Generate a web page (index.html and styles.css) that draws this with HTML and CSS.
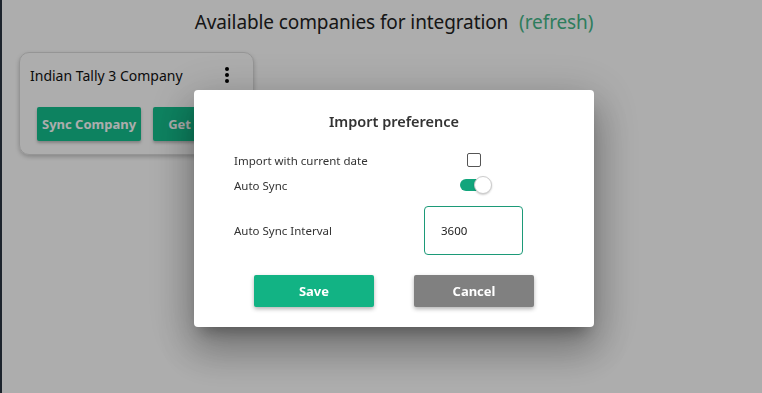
FILE: index.html
```html
<!DOCTYPE html>
<html lang="en">
<head>
  <meta charset="UTF-8" />
  <meta name="viewport" content="width=device-width, initial-scale=1.0"/>
  <title>Integration</title>
  <link rel="stylesheet" href="styles.css">
</head>
<body>

<div class="app">
  <div class="side-edge"></div>

  <main class="content">
    <h1 class="page-title">
      Available companies for integration
      <a href="#" class="refresh">(refresh)</a>
    </h1>

    <div class="company-card">
      <div class="card-head">
        <span class="company-name">Indian Tally 3 Company</span>
        <div class="kebab">
          <span></span>
          <span></span>
          <span></span>
        </div>
      </div>
      <div class="card-actions">
        <button class="card-button">Sync Company</button>
        <button class="card-button wide">Get Ledgers</button>
      </div>
    </div>
  </main>
</div>

<div class="overlay">
  <div class="dialog">
    <h2 class="dialog-title">Import preference</h2>

    <div class="pref-grid">
      <label class="pref-label" for="currentDate">Import with current date</label>
      <div class="pref-control">
        <input type="checkbox" id="currentDate" class="checkbox">
      </div>

      <span class="pref-label">Auto Sync</span>
      <div class="pref-control">
        <div class="toggle">
          <div class="toggle-track"></div>
          <div class="toggle-knob"></div>
        </div>
      </div>

      <label class="pref-label interval-row" for="interval">Auto Sync Interval</label>
      <div class="pref-control interval-row">
        <input type="text" id="interval" class="interval-input" value="3600">
      </div>
    </div>

    <div class="dialog-actions">
      <button class="btn btn-save">Save</button>
      <button class="btn btn-cancel">Cancel</button>
    </div>
  </div>
</div>

</body>
</html>
```

FILE: styles.css
```css
* {
  box-sizing: border-box;
  margin: 0;
  padding: 0;
  font-family: 'Noto Sans', 'Open Sans', sans-serif;
}

body {
  background: #ffffff;
  height: 393px;
  overflow: hidden;
}

.app {
  display: flex;
  height: 100%;
}

.side-edge {
  width: 2px;
  background: #2a3441;
  flex-shrink: 0;
}

.content {
  flex: 1;
  padding: 9px 17px;
}

.page-title {
  text-align: center;
  font-size: 19px;
  font-weight: 400;
  color: #222;
  padding-left: 24px;
  letter-spacing: -0.1px;
}

.refresh {
  color: #45b88a;
  text-decoration: none;
  margin-left: 6px;
}

.company-card {
  width: 235px;
  margin-top: 17px;
  border: 1px solid #dcdcdc;
  border-radius: 10px;
  box-shadow: 0 2px 4px rgba(0, 0, 0, 0.22);
  padding: 10px 10px 13px 10px;
}

.card-head {
  display: flex;
  justify-content: space-between;
  align-items: center;
  height: 24px;
}

.company-name {
  font-size: 14px;
  color: #111;
}

.kebab {
  display: flex;
  flex-direction: column;
  gap: 2px;
  margin-right: 14px;
}

.kebab span {
  width: 4px;
  height: 4px;
  border-radius: 50%;
  background: #000;
}

.card-actions {
  display: flex;
  gap: 12px;
  margin-top: 20px;
  padding-left: 7px;
}

.card-button {
  background: #14c08e;
  color: #fff;
  border: none;
  border-radius: 2px;
  height: 34px;
  padding: 0 5px;
  font-size: 13px;
  font-weight: 700;
  box-shadow: 0 2px 3px rgba(0, 0, 0, 0.25);
  white-space: nowrap;
}

.card-button.wide {
  padding: 0 15px;
}

.overlay {
  position: fixed;
  inset: 0;
  background: rgba(0, 0, 0, 0.32);
  display: flex;
  justify-content: center;
  align-items: flex-start;
  padding-left: 26px;
  padding-top: 90px;
}

.dialog {
  width: 400px;
  background: #fff;
  border-radius: 4px;
  padding: 21px 40px 20px;
  box-shadow: 0 11px 15px -7px rgba(0, 0, 0, 0.3),
              0 24px 38px 3px rgba(0, 0, 0, 0.22),
              0 9px 46px 8px rgba(0, 0, 0, 0.16);
}

.dialog-title {
  text-align: center;
  font-size: 14.5px;
  font-weight: 600;
  color: #333;
  line-height: 20px;
  margin-bottom: 18px;
}

.pref-grid {
  display: grid;
  grid-template-columns: 190px 99px;
  grid-template-rows: 20px 20px 55px;
  row-gap: 5px;
  align-items: center;
  padding-top: 1px;
}

.pref-label {
  font-size: 11.5px;
  color: #333;
}

.interval-row {
  align-self: end;
  line-height: 49px;
  height: 49px;
}

.pref-control {
  display: flex;
  justify-content: center;
}

.checkbox {
  appearance: none;
  width: 14px;
  height: 14px;
  border: 1.5px solid #555;
  border-radius: 2px;
  background: #fff;
}

.toggle {
  position: relative;
  width: 32px;
  height: 18px;
  margin-left: 4px;
}

.toggle-track {
  position: absolute;
  left: 0;
  top: 3px;
  width: 28px;
  height: 12px;
  border-radius: 6px;
  background: #12a57c;
}

.toggle-knob {
  position: absolute;
  right: 0;
  top: 0;
  width: 18px;
  height: 18px;
  border-radius: 50%;
  background: #fff;
  border: 1px solid #ccc;
  box-shadow: 0 1px 2px rgba(0, 0, 0, 0.2);
}

.interval-input {
  width: 99px;
  height: 49px;
  border: 1px solid #1c9a78;
  border-radius: 4px;
  padding-left: 16px;
  font-size: 11.5px;
  color: #222;
  outline: none;
}

.dialog-actions {
  display: flex;
  justify-content: center;
  gap: 40px;
  margin-top: 20px;
}

.btn {
  width: 120px;
  height: 32px;
  border: none;
  border-radius: 2px;
  color: #fff;
  font-size: 13px;
  font-weight: 700;
  box-shadow: 0 2px 4px rgba(0, 0, 0, 0.3);
}

.btn-save {
  background: #12b384;
}

.btn-cancel {
  background: #808080;
}
```
